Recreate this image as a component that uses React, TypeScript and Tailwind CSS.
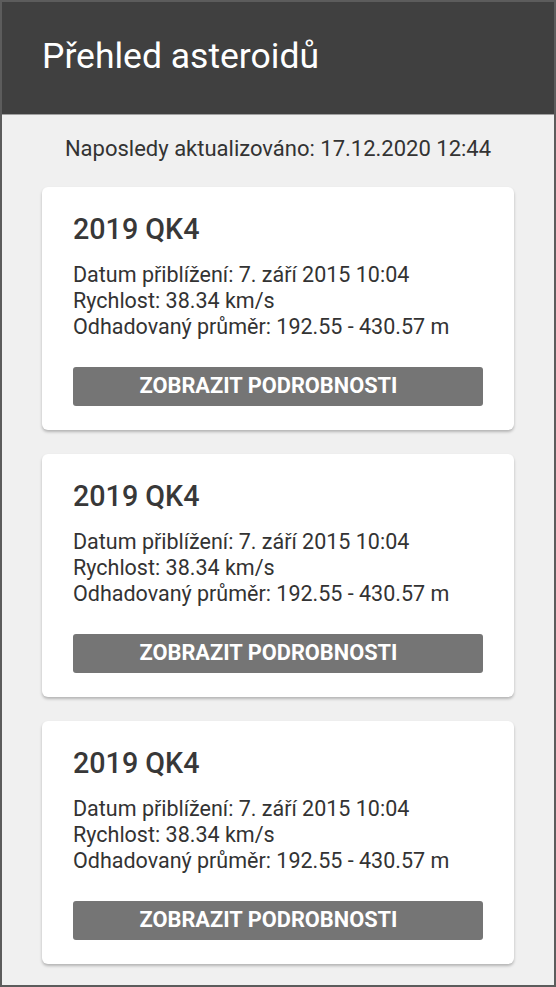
import React from "react";

const asteroids = [
  { name: "2019 QK4", date: "7. září 2015 10:04", speed: "38.34 km/s", diameter: "192.55 - 430.57 m" },
  { name: "2019 QK4", date: "7. září 2015 10:04", speed: "38.34 km/s", diameter: "192.55 - 430.57 m" },
  { name: "2019 QK4", date: "7. září 2015 10:04", speed: "38.34 km/s", diameter: "192.55 - 430.57 m" },
];

const AsteroidCard = ({ a }: { a: (typeof asteroids)[number] }) => (
  <div className="bg-white rounded-md shadow-[0_2px_3px_rgba(0,0,0,0.25)] px-[31px] pt-[25px] pb-[24px]">
    <h2 className="text-[28.7px] font-medium leading-[35px] text-[#383838]">{a.name}</h2>
    <div className="mt-[15px] text-[21.5px] leading-[26px] text-[#333]">
      <p>Datum přiblížení: {a.date}</p>
      <p>Rychlost: {a.speed}</p>
      <p>Odhadovaný průměr: {a.diameter}</p>
    </div>
    <button className="mt-[27px] w-full h-[39px] rounded-[3px] bg-[#757575] pr-[19px] text-white font-bold text-[21.8px] uppercase">
      Zobrazit podrobnosti
    </button>
  </div>
);

export default function App() {
  return (
    <div className="h-[987px] w-[556px] border-2 border-[#5c5c5c] bg-[#f0f0f0] font-['Roboto',sans-serif] overflow-hidden">
      <header className="h-[113px] bg-[#404040] border-b border-[#a0a0a0] flex items-center pl-[40px] pb-[3px]">
        <h1 className="text-white text-[35.5px] leading-none">Přehled asteroidů</h1>
      </header>
      <p className="mt-[21px] text-center text-[22px] leading-[26px] text-[#333]">
        Naposledy aktualizováno: 17.12.2020 12:44
      </p>
      <div className="mt-[25px] px-[40px] flex flex-col gap-[24px]">
        {asteroids.map((a, i) => (
          <AsteroidCard key={i} a={a} />
        ))}
      </div>
    </div>
  );
}
